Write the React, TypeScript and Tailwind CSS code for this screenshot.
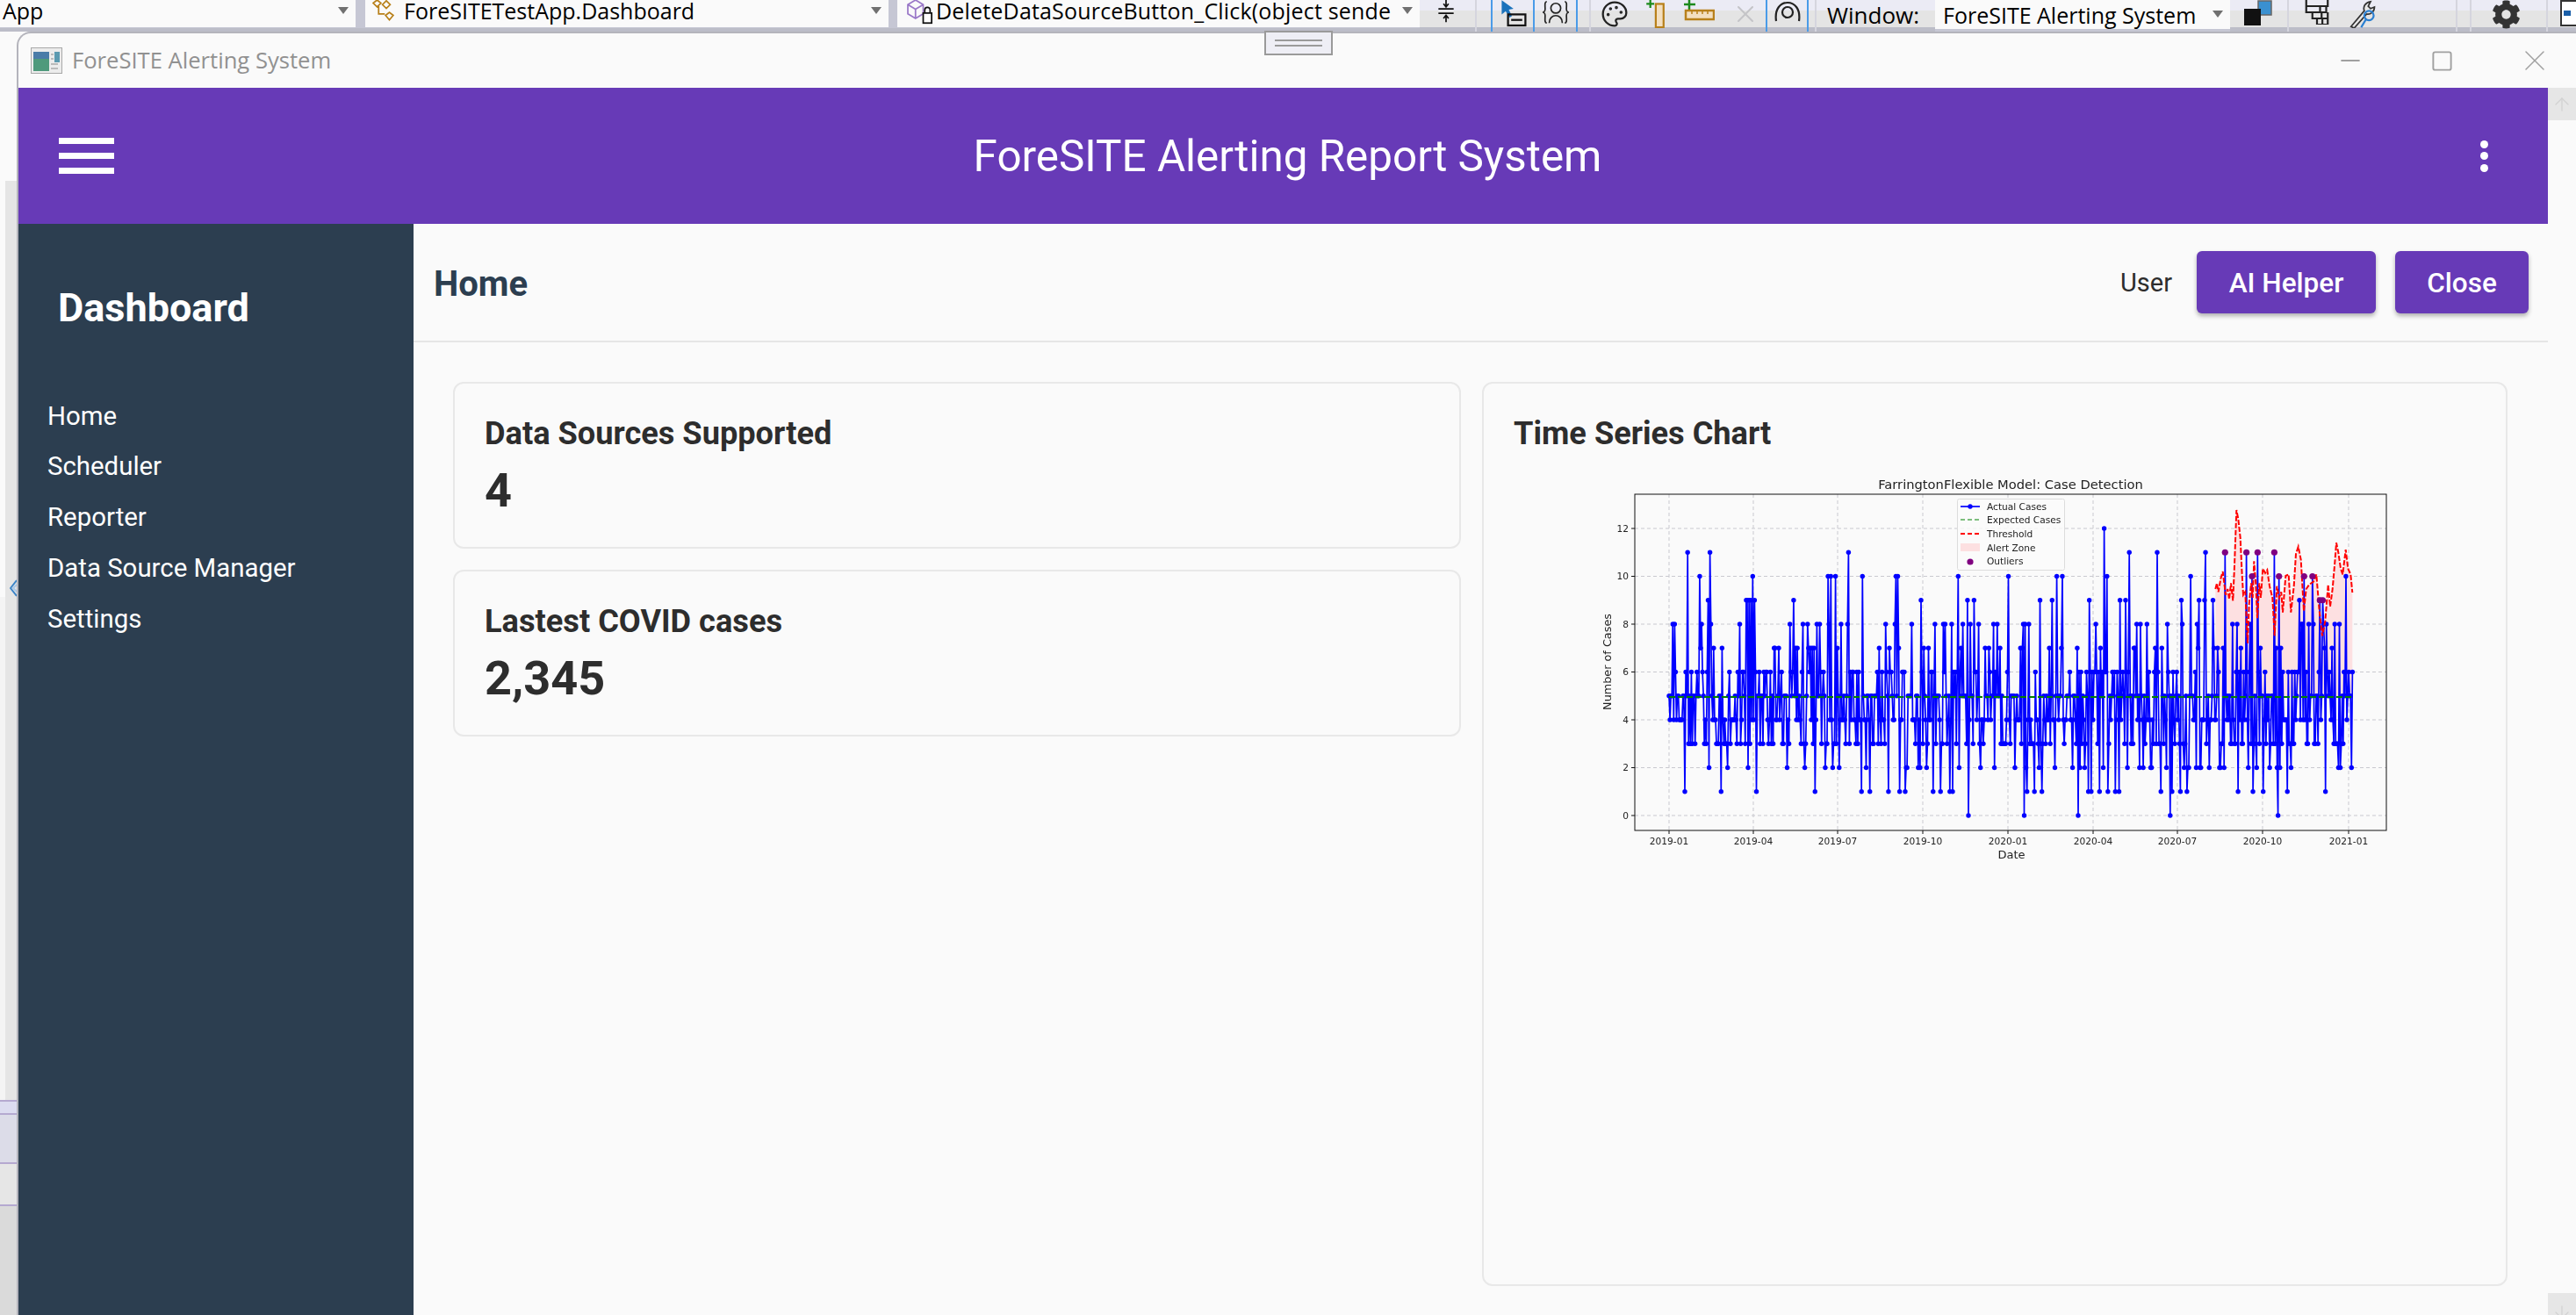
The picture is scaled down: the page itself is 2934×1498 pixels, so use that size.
import { Palette, X, Minus, Square, ArrowUp, ArrowDown } from "lucide-react";
import { FaCog } from "react-icons/fa";

const NAV_ITEMS = ["Home", "Scheduler", "Reporter", "Data Source Manager", "Settings"];

// chart scale, worked out from the axes of the plot
const dayX = (d: number) => 1901 + d * 1.059;
const valY = (v: number) => 601 + (12 - v) * 27.25;
const zx = (x: number) => 2240 + x / 3;
const zy = (y: number) => 530 + y / 3;

const PINNED: Record<number, number> = {};
const pin = (v: number, days: number[]) => days.forEach((d) => (PINNED[d] = v));
pin(5, [0, 2, 3]);
pin(4, [1]);
pin(9, [42, 83, 84, 86, 88, 92, 134, 271, 321, 328, 399, 412, 452, 485, 491, 551, 570, 576, 585, 678, 700, 703]);
pin(10, [33, 90, 171, 174, 179, 208, 244, 246, 311, 365, 417, 423, 471, 561, 627, 656, 683, 692, 728]);
pin(11, [20, 44, 193, 495, 525, 577, 598, 621, 633, 651]);
pin(12, [468]);
pin(1, [17, 56, 94, 157, 207, 216, 236, 248, 254, 284, 292, 302, 305, 385, 393, 401, 451, 454, 463, 472, 480, 484, 529, 541, 550, 557, 612, 628, 639, 665, 706]);
pin(0, [322, 382, 440, 539, 655]);
pin(2, [734]);
pin(6, [735]);

function buildCases() {
  let seed = 20190101;
  const next = () => {
    seed = (seed * 1664525 + 1013904223) % 4294967296;
    return seed / 4294967296;
  };
  const weights = [
    [2, 0.09],
    [3, 0.2],
    [4, 0.23],
    [5, 0.22],
    [6, 0.14],
    [7, 0.07],
    [8, 0.05],
  ];
  const out: number[] = [];
  for (let d = 0; d <= 735; d++) {
    if (PINNED[d] !== undefined) {
      out.push(PINNED[d]);
      continue;
    }
    let r = next();
    let v = 5;
    for (const [val, w] of weights) {
      if (r < w) {
        v = val;
        break;
      }
      r -= w;
    }
    out.push(v);
  }
  return out;
}

const CASES = buildCases();
const CASE_LINE = CASES.map((v, d) => `${dayX(d).toFixed(1)},${valY(v).toFixed(1)}`).join(" ");

const THRESHOLD: [number, number][] = [
  [850, 420], [855, 400], [860, 430], [868, 385], [875, 360], [880, 400], [885, 440], [892, 420], [897, 455], [903, 400],
  [910, 460], [915, 340], [922, 150], [928, 180], [935, 245], [940, 350], [945, 440], [952, 430], [960, 605], [965, 470],
  [972, 400], [977, 450], [982, 325], [988, 400], [993, 520], [1000, 400], [1005, 450], [1012, 350], [1020, 365], [1027, 355],
  [1035, 410], [1045, 450], [1052, 580], [1060, 410], [1068, 450], [1075, 430], [1080, 500], [1090, 375], [1100, 370], [1108, 500],
  [1118, 410], [1125, 300], [1133, 275], [1142, 320], [1152, 495], [1160, 420], [1170, 405], [1185, 395], [1195, 370], [1205, 495],
  [1215, 580], [1225, 530], [1235, 405], [1242, 480], [1250, 420], [1258, 330], [1263, 262], [1270, 295], [1278, 350], [1285, 370],
  [1295, 285], [1303, 350], [1312, 370], [1318, 432],
];
const THRESHOLD_LINE = THRESHOLD.map(([x, y]) => `${zx(x).toFixed(1)},${zy(y).toFixed(1)}`).join(" ");
const ALERT_ZONE = `${zx(850)},793 ${THRESHOLD_LINE} ${zx(1318)},793`;

const OUTLIERS = [598, 621, 627, 633, 651, 656, 683, 692, 700, 703];
const X_TICKS = [
  [1901, "2019-01"], [1997, "2019-04"], [2093, "2019-07"], [2190, "2019-10"], [2287, "2020-01"],
  [2384, "2020-04"], [2480, "2020-07"], [2577, "2020-10"], [2675, "2021-01"],
] as const;
const Y_TICKS = [0, 2, 4, 6, 8, 10, 12];
const LEGEND_ROWS = [
  [576, "Actual Cases"], [591, "Expected Cases"], [607, "Threshold"], [623, "Alert Zone"], [638, "Outliers"],
] as const;

function TimeSeriesChart() {
  return (
    <svg width="930" height="450" viewBox="1810 540 930 450" className="self-center ml-[6px] blur-[0.3px]" fontFamily="'DejaVu Sans', sans-serif" fill="#222">
      <text x="2290" y="556" fontSize="14.7" textAnchor="middle">FarringtonFlexible Model: Case Detection</text>
      {X_TICKS.map(([x]) => (
        <line key={x} x1={x} x2={x} y1="562" y2="945" stroke="#c9c9cf" strokeDasharray="4 3" />
      ))}
      {Y_TICKS.map((v) => (
        <line key={v} x1="1862" x2="2718" y1={valY(v)} y2={valY(v)} stroke="#c9c9cf" strokeDasharray="4 3" />
      ))}
      <polygon points={ALERT_ZONE} fill="#fde0e1" />
      <polyline points={CASE_LINE} fill="none" stroke="#0000ff" strokeWidth="1.7" strokeLinejoin="round" />
      {CASES.map((v, d) => (
        <circle key={d} cx={dayX(d)} cy={valY(v)} r="2.7" fill="#0000ff" />
      ))}
      <line x1="1901" x2="2679" y1="793" y2="793" stroke="#008000" strokeWidth="2" strokeDasharray="7 3" />
      <polyline points={THRESHOLD_LINE} fill="none" stroke="#ff0000" strokeWidth="2" strokeDasharray="6 2" />
      {OUTLIERS.map((d) => (
        <circle key={d} cx={dayX(d)} cy={valY(PINNED[d])} r="3.6" fill="#800080" />
      ))}
      <rect x="1862" y="562" width="856" height="383" fill="none" stroke="#111" strokeWidth="1" />
      {X_TICKS.map(([x, label]) => (
        <g key={label}>
          <line x1={x} x2={x} y1="945" y2="949" stroke="#111" />
          <text x={x} y="961" fontSize="10.6" textAnchor="middle">{label}</text>
        </g>
      ))}
      {Y_TICKS.map((v) => (
        <g key={v}>
          <line x1="1858" x2="1862" y1={valY(v)} y2={valY(v)} stroke="#111" />
          <text x="1855" y={valY(v) + 3.8} fontSize="10.6" textAnchor="end">{v}</text>
        </g>
      ))}
      <text x="2291" y="977" fontSize="13" textAnchor="middle">Date</text>
      <text x="1835" y="753" fontSize="12.8" textAnchor="middle" transform="rotate(-90 1835 753)">Number of Cases</text>
      <rect x="2229.5" y="567.5" width="122" height="81" rx="2" fill="#fafafa" fillOpacity="0.85" stroke="#dcdcdc" />
      <line x1="2233" x2="2255" y1="576" y2="576" stroke="#0000ff" strokeWidth="1.7" />
      <circle cx="2244" cy="576" r="2.7" fill="#0000ff" />
      <line x1="2233" x2="2255" y1="591" y2="591" stroke="#008000" strokeDasharray="5 3" />
      <line x1="2233" x2="2255" y1="607" y2="607" stroke="#ff0000" strokeWidth="2" strokeDasharray="5 3" />
      <rect x="2233" y="618" width="22" height="9" fill="#fde0e1" />
      <circle cx="2244" cy="639" r="3.6" fill="#800080" />
      {LEGEND_ROWS.map(([y, label]) => (
        <text key={label} x="2263" y={y + 3.8} fontSize="10.6">{label}</text>
      ))}
    </svg>
  );
}

function Caret({ className }: { className: string }) {
  return <span className={`block ml-auto w-0 h-0 border-x-[6px] border-x-transparent border-t-[8px] border-t-[#707070] ${className}`} />;
}

function Combo({ className, text, textClass = "leading-[24px]", caretClass = "mt-[8px] mr-2", children }: { className: string; text: string; textClass?: string; caretClass?: string; children?: React.ReactNode }) {
  return (
    <div className={`bg-[#fafafa] flex items-start shrink-0 ${className}`}>
      {children}
      <span className={`text-[25px] text-black whitespace-nowrap ${textClass}`}>{text}</span>
      <Caret className={caretClass} />
    </div>
  );
}

function ToolCell({ w, className = "", children }: { w: string; className?: string; children?: React.ReactNode }) {
  return <div className={`h-[36px] shrink-0 flex items-start justify-center bg-[linear-gradient(to_bottom,#ebebf5_12px,#e4e4e4_12px,#e4e4e4_31px,#bcbdc8_31px)] ${w} ${className}`}>{children}</div>;
}

function Toolbar() {
  return (
    <div className="h-[36px] shrink-0 flex bg-[#c6c7d4] relative" style={{ fontFamily: "'Open Sans', sans-serif" }}>
      <div className="h-[36px] flex shrink-0 border-b-[4px] border-b-[#bcbdc8]">
        <Combo className="w-[405px] h-[31px] pl-[3px]" text="App" />
        <Combo className="w-[596px] h-[31px] ml-[11px] pl-[4px]" text="ForeSITETestApp.Dashboard">
          <svg width="40" height="28" viewBox="0 0 40 32" fill="none" stroke="#b8801a" strokeWidth="2" className="shrink-0">
            <path d="M3 4l5-4 5 4-5 5zM15 6l5-5 5 5-5 5zM10 8v10h8M19 20l5-4 5 4-5 6z" />
          </svg>
        </Combo>
        <Combo className="w-[595px] h-[31px] ml-[10px] pl-[8px]" text="DeleteDataSourceButton_Click(object sende" textClass="leading-[24px] tracking-[0.18px]" caretClass="mt-[8px] mr-[8px]">
          <svg width="36" height="28" viewBox="0 0 36 32" fill="none" className="shrink-0">
            <path d="M2 6l10-6 10 6v12l-10 6-10-6zM2 6l10 6 10-6M12 12v12" stroke="#9a78c8" strokeWidth="2" />
            <rect x="22" y="17" width="11" height="13" fill="#fff" stroke="#111" strokeWidth="2" />
            <path d="M24 17v-4a3.5 3.5 0 017 0v4" stroke="#111" strokeWidth="2" />
          </svg>
        </Combo>
      </div>
      <ToolCell w="w-[63px]" className="pr-[4px]">
        <svg width="26" height="26" viewBox="0 0 30 36" fill="none" stroke="#111" strokeWidth="2.5">
          <path d="M3 14h24M3 21h24M15 0v10M11 6l4 5 4-5M15 25v10M11 29l4-5 4 5" strokeWidth="2.4" />
        </svg>
      </ToolCell>
      <ToolCell w="w-[18px]" className="border-l-2 border-l-[#d5d5de]" />
      <ToolCell w="w-[48px]" className="border-l-2 border-l-[#4a9be8]">
        <svg width="36" height="31" viewBox="0 0 40 34" fill="none">
          <path d="M6 0l0 18 5-4 5 8 3-2-4-8 6-1z" fill="#1a72bb" />
          <rect x="14" y="18" width="22" height="14" stroke="#111" strokeWidth="2.5" />
          <path d="M18 25h14" stroke="#111" strokeWidth="2.5" />
        </svg>
      </ToolCell>
      <ToolCell w="w-[49px]" className="border-l-2 border-l-[#4a9be8]">
        <svg width="32" height="28" viewBox="0 0 34 30" fill="none" stroke="#222" strokeWidth="1.8">
          <path d="M6 2c-3 0-2 5-2 9 0 3-2 4-3 4 1 0 3 1 3 4 0 4-1 9 2 9M28 2c3 0 2 5 2 9 0 3 2 4 3 4-1 0-3 1-3 4 0 4 1 9-2 9" />
          <circle cx="17" cy="10" r="6" />
          <path d="M9 28c0-12 16-12 16 0" />
        </svg>
      </ToolCell>
      <ToolCell w="w-[15px]" className="border-l-2 border-l-[#4a9be8]" />
      <ToolCell w="w-[55px]" className="border-l-2 border-l-[#d5d5de]">
        <Palette size={32} color="#222" strokeWidth={1.7} />
      </ToolCell>
      <ToolCell w="w-[40px]">
        <svg width="22" height="32" viewBox="0 0 24 36" fill="none">
          <path d="M1 5h10M6 0v10" stroke="#1c8a1c" strokeWidth="2.5" />
          <rect x="13" y="5" width="10" height="30" fill="#f3dfc0" stroke="#b8801a" strokeWidth="2.5" />
        </svg>
      </ToolCell>
      <ToolCell w="w-[60px]">
        <svg width="36" height="24" viewBox="0 0 36 24" fill="none">
          <path d="M1 5h13M7 0v11" stroke="#1c8a1c" strokeWidth="2.5" />
          <rect x="3" y="12" width="32" height="10" fill="#f3dfc0" stroke="#b8801a" strokeWidth="2.5" />
          <path d="M10 12v4M16 12v4M22 12v4M28 12v4" stroke="#b8801a" strokeWidth="1.5" />
        </svg>
      </ToolCell>
      <ToolCell w="w-[46px]">
        <X size={32} color="#c4c4c8" strokeWidth={1.5} />
      </ToolCell>
      <ToolCell w="w-[47px]" className="border-l-2 border-l-[#4a9be8]">
        <svg width="32" height="26" viewBox="0 0 32 26" fill="none" stroke="#222" strokeWidth="2.2">
          <path d="M3 24C1 10 8 3 16 3s15 7 13 21" />
          <circle cx="16" cy="14" r="6" />
        </svg>
      </ToolCell>
      <ToolCell w="w-[9px]" className="border-l-2 border-l-[#4a9be8]" />
      <ToolCell w="w-[137px]" className="border-l-2 border-l-[#d5d5de]">
        <span className="text-[26px] leading-[34px] text-black -ml-[6px]">Window:</span>
      </ToolCell>
      <Combo className="w-[336px] h-[33px] pl-[9px]" text="ForeSITE Alerting System" textClass="leading-[34px]" caretClass="mt-[12px] mr-[8px]" />
      <ToolCell w="w-[65px]">
        <svg width="34" height="30" viewBox="0 0 34 30" fill="none" className="-ml-[2px]">
          <rect x="17" y="1" width="15" height="16" fill="#3a90d0" stroke="#666" strokeWidth="1.5" />
          <rect x="1" y="10" width="19" height="19" fill="#111" />
        </svg>
      </ToolCell>
      <ToolCell w="w-[65px]" className="border-l-2 border-l-[#d5d5de]">
        <svg width="30" height="28" viewBox="0 0 32 32" fill="none" stroke="#222" strokeWidth="2.5">
          <path d="M2 0v8h28V0M2 8v8h26V8M10 16v8h20v-8M16 24v8h14v-8M23 24v8M20 8v8M22 16v8" />
        </svg>
      </ToolCell>
      <ToolCell w="w-[127px]" className="justify-start pl-[3px]">
        <svg width="38" height="32" viewBox="0 0 40 36" fill="none">
          <path d="M4 34l17-20c-2-5 1-11 8-12l-3 6 3 3 5-2c0 6-5 10-10 9L8 36z" stroke="#333" strokeWidth="2" fill="#e8e8e8" />
          <circle cx="27" cy="20" r="6" stroke="#2a7fd0" strokeWidth="2.5" />
          <path d="M23 25l-6 10" stroke="#2a7fd0" strokeWidth="2.5" />
        </svg>
      </ToolCell>
      <ToolCell w="w-[16px]" className="border-l-2 border-l-[#d5d5de]" />
      <ToolCell w="w-[87px]" className="border-l-2 border-l-[#d5d5de] pr-[6px]">
        <FaCog size={33} color="#333" />
      </ToolCell>
      <ToolCell w="w-[34px]" className="border-l-2 border-l-[#d5d5de] justify-end">
        <div className="w-[18px] h-[30px] border-2 border-r-0 border-[#333] bg-white flex items-center">
          <span className="w-[8px] h-[6px] ml-[2px] bg-[#1a5fa8]" />
        </div>
      </ToolCell>
    </div>
  );
}

function TitleBar() {
  return (
    <div className="h-[62px] shrink-0 flex items-center" style={{ fontFamily: "'Open Sans', sans-serif" }}>
      <svg width="36" height="30" viewBox="0 0 36 30" className="ml-[14px] shrink-0">
        <rect x="0.5" y="0.5" width="35" height="29" fill="#ececec" stroke="#a8a8a8" />
        <rect x="3" y="5" width="18" height="22" fill="#4f9a7c" />
        <rect x="3" y="5" width="18" height="8" fill="#4a7ca8" />
        <rect x="27" y="5" width="6" height="12" fill="#5b9ab0" />
        <rect x="23" y="7" width="3" height="2" fill="#bbb" />
        <rect x="23" y="12" width="3" height="2" fill="#bbb" />
        <rect x="23" y="18" width="8" height="2" fill="#bbb" />
        <rect x="23" y="23" width="8" height="2" fill="#bbb" />
      </svg>
      <span className="ml-[11px] text-[25.6px] text-[#919191]">ForeSITE Alerting System</span>
      <div className="ml-auto flex items-center text-[#a0a0a0] mr-[27px]">
        <Minus size={34} strokeWidth={1.3} />
        <Square size={27} strokeWidth={1.7} className="ml-[74px]" />
        <X size={40} strokeWidth={0.9} className="ml-[72px]" />
      </div>
    </div>
  );
}

function AppBar() {
  return (
    <div className="h-[155px] shrink-0 bg-[#673ab7] flex items-center justify-between pl-[46px] pr-[68px] text-white">
      <div className="flex flex-col gap-[10px]">
        <span className="block w-[63px] h-[7px] bg-white" />
        <span className="block w-[63px] h-[7px] bg-white" />
        <span className="block w-[63px] h-[7px] bg-white" />
      </div>
      <h1 className="text-[49.4px] font-normal leading-none mt-[3px] -ml-[22px]">ForeSITE Alerting Report System</h1>
      <div className="flex flex-col gap-[4.5px]">
        <span className="block w-[9px] h-[9px] rounded-full bg-white" />
        <span className="block w-[9px] h-[9px] rounded-full bg-white" />
        <span className="block w-[9px] h-[9px] rounded-full bg-white" />
      </div>
    </div>
  );
}

function Sidebar() {
  return (
    <aside className="w-[450px] shrink-0 bg-[#2c3e50] text-white pt-[70px]">
      <div className="pl-[45px] text-[45px] leading-[52px] font-bold">Dashboard</div>
      <nav className="mt-[68px] pl-[33px]">
        {NAV_ITEMS.map((item) => (
          <div key={item} className="h-[57.7px] flex items-center text-[29.4px]">{item}</div>
        ))}
      </nav>
    </aside>
  );
}

function ActionButton({ label, w }: { label: string; w: string }) {
  return (
    <button className={`h-[71px] pt-[3px] rounded-[6px] bg-[#673ab7] text-white text-[31.5px] font-medium shadow-[0_3px_5px_rgba(0,0,0,0.3)] ${w}`}>
      {label}
    </button>
  );
}

function StatCard({ title, value }: { title: string; value: string }) {
  return (
    <div className="h-[190px] border-2 border-[#e8e8e8] rounded-xl pt-[35px] px-[34px]">
      <div className="text-[36.2px] leading-[44px] font-bold text-[#2d2d2d]">{title}</div>
      <div className="mt-[11px] text-[54px] leading-[64px] font-bold text-[#2d2d2d]">{value}</div>
    </div>
  );
}

function MainPanel() {
  return (
    <main className="flex-1 flex flex-col min-w-0 bg-[#fafafa]">
      <div className="h-[135px] shrink-0 border-b-2 border-[#e6e6e6] flex items-center pl-[23px] pr-[22px]">
        <h2 className="text-[40px] font-bold text-[#2c3e50] mt-[4px]">Home</h2>
        <span className="ml-auto text-[29px] text-[#2d2d2d] mt-[3px]">User</span>
        <div className="ml-[28px] flex gap-[22px]">
          <ActionButton label="AI Helper" w="w-[204px]" />
          <ActionButton label="Close" w="w-[152px]" />
        </div>
      </div>
      <div className="flex-1 grid grid-cols-[1148px_1168px] gap-[24px] pt-[45px] pl-[45px] pb-[33px]">
        <div className="flex flex-col gap-[24px]">
          <StatCard title="Data Sources Supported" value="4" />
          <StatCard title="Lastest COVID cases" value="2,345" />
        </div>
        <div className="border-2 border-[#e8e8e8] rounded-xl pt-[35px] px-[34px] flex flex-col">
          <div className="text-[36.2px] leading-[44px] font-bold text-[#2d2d2d]">Time Series Chart</div>
          <div className="mt-[25px] flex flex-col">
            <TimeSeriesChart />
          </div>
        </div>
      </div>
    </main>
  );
}

function ScrollRail() {
  return (
    <div className="flex-1 flex flex-col justify-between bg-[#fafafa]">
      <div className="h-[37px] bg-[#e6e6e6] flex items-center justify-center text-[#d2d2d2]">
        <ArrowUp size={24} strokeWidth={1.3} />
      </div>
      <div className="h-[25px] bg-[#e6e6e6] flex items-start justify-center pt-[10px] text-[#d2d2d2]">
        <ArrowDown size={24} strokeWidth={1.3} />
      </div>
    </div>
  );
}

function LeftStrip() {
  return (
    <div className="w-[19px] shrink-0 flex flex-col bg-[#e5e5e5]">
      <div className="h-[170px] shrink-0 bg-[#fafafa]" />
      <div className="h-[454px] shrink-0 bg-[linear-gradient(to_right,#fafafa_6px,#e5e5e5_6px)]" />
      <div className="h-[20px] shrink-0 bg-[linear-gradient(to_right,#fafafa_6px,#e5e5e5_6px)] flex justify-end">
        <svg width="8" height="20" viewBox="0 0 8 20" fill="none">
          <path d="M8 1L1 10l7 9" stroke="#3d85c8" strokeWidth="2" />
          <path d="M8 6l-4 4 4 4" stroke="#a9c8e8" strokeWidth="2" />
        </svg>
      </div>
      <div className="h-[573px] shrink-0 bg-[linear-gradient(to_right,#f4f4f4_6px,#e5e5e5_6px)]" />
      <div className="h-[17px] shrink-0 bg-[#dcdcf0] border-y-2 border-[#b5a9d0]" />
      <div className="h-[56px] shrink-0 bg-[#dcdce8] border-b-2 border-[#b5a9d0]" />
      <div className="h-[48px] shrink-0 bg-[#e6e6e6] border-b-2 border-[#b5a9d0]" />
      <div className="flex-1 bg-[#dadada]" />
    </div>
  );
}

export default function App() {
  return (
    <div className="relative w-[2934px] h-[1498px] overflow-hidden flex flex-col bg-[#fafafa]" style={{ fontFamily: "Roboto, sans-serif" }}>
      <Toolbar />
      <div className="flex-1 flex min-h-0">
        <LeftStrip />
        <div className="flex-1 flex flex-col min-w-0 bg-[#fafafa] border-l-2 border-t-2 border-[#b4b4bc] rounded-tl-[16px]">
          <TitleBar />
          <div className="flex-1 flex min-h-0">
            <div className="w-[2881px] shrink-0 flex flex-col">
              <AppBar />
              <div className="flex-1 flex min-h-0">
                <Sidebar />
                <MainPanel />
              </div>
            </div>
            <ScrollRail />
          </div>
        </div>
      </div>
      <div className="absolute left-[1440px] top-[35px] w-[78px] h-[28px] bg-[#eeeef5] border-2 border-[#9a9a9a] flex flex-col items-center justify-center gap-[4px]">
        <span className="block w-[54px] h-[2px] bg-[#9a9a9a]" />
        <span className="block w-[54px] h-[2px] bg-[#9a9a9a]" />
      </div>
    </div>
  );
}
